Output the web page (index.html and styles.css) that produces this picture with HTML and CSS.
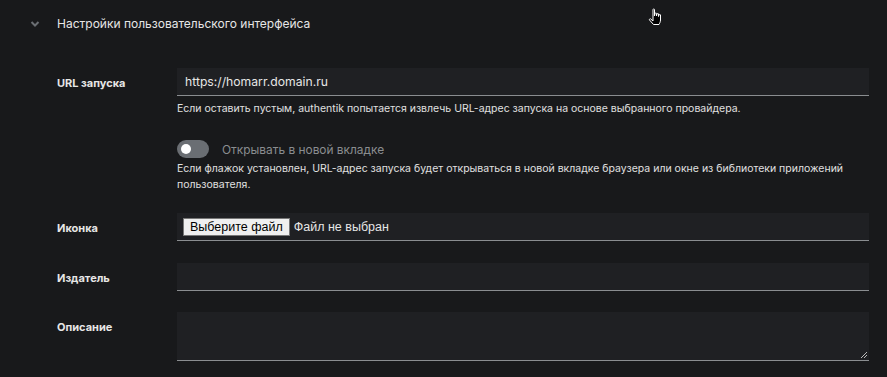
FILE: index.html
```html
<!DOCTYPE html>
<html lang="ru">
<head>
<meta charset="utf-8">
<link rel="stylesheet" href="styles.css">
</head>
<body>
<div class="page">
  <div class="section-head">
    <svg class="chev" width="10" height="8" viewBox="0 0 10 8"><path d="M1.5 2 L5 5.5 L8.5 2" fill="none" stroke="#6a6e73" stroke-width="2"/></svg>
    <span class="section-title">Настройки пользовательского интерфейса</span>
  </div>
  <div class="form">
    <div class="row">
      <div class="label">URL запуска</div>
      <div class="field">
        <div class="input">https://homarr.domain.ru</div>
        <div class="help">Если оставить пустым, authentik попытается извлечь URL-адрес запуска на основе выбранного провайдера.</div>
      </div>
    </div>
    <div class="row">
      <div class="label"></div>
      <div class="field">
        <div class="switch-row">
          <span class="switch"><span class="knob"></span></span>
          <span class="switch-label">Открывать в новой вкладке</span>
        </div>
        <div class="help help2">Если флажок установлен, URL-адрес запуска будет открываться в новой вкладке браузера или окне из библиотеки приложений пользователя.</div>
      </div>
    </div>
    <div class="row">
      <div class="label">Иконка</div>
      <div class="field">
        <div class="input file"><span class="file-btn">Выберите файл</span><span class="file-text">Файл не выбран</span></div>
      </div>
    </div>
    <div class="row">
      <div class="label">Издатель</div>
      <div class="field">
        <div class="input"></div>
      </div>
    </div>
    <div class="row">
      <div class="label">Описание</div>
      <div class="field">
        <div class="input textarea">
          <svg class="grip" width="9" height="9" viewBox="0 0 9 9"><path d="M8 2 L2 8 M8 5 L5 8" stroke="#bbb" stroke-width="1"/></svg>
        </div>
      </div>
    </div>
  </div>
  <svg class="cursor" width="18" height="20" viewBox="0 0 18 20"><path d="M5 1.5 C5 0.8 6.5 0.8 6.5 1.5 L6.5 8 L7 5.5 C7 4.8 8.5 4.8 8.5 5.5 L8.5 8 L9 6 C9 5.3 10.5 5.3 10.5 6 L10.5 8.5 L11 7 C11 6.3 12.5 6.3 12.5 7 L12.5 12 C12.5 14 11.5 15.5 11 16.5 L5.5 16.5 L1.5 12 C1 11.3 2 10.3 2.8 11 L5 13 Z" fill="#000" stroke="#fff" stroke-width="1"/></svg>
</div>
</body>
</html>
```

FILE: styles.css
```css
html, body {
  margin: 0;
  padding: 0;
  background: #18191b;
}
.page {
  position: relative;
  width: 887px;
  height: 377px;
  overflow: hidden;
  font-family: "Inter", "Liberation Sans", sans-serif;
  color: #e0e0e0;
}
.section-head {
  display: flex;
  align-items: center;
  height: 44px;
  padding-left: 30px;
  padding-top: 2px;
  box-sizing: border-box;
}
.chev {
  margin-right: 17px;
  margin-top: 1px;
}
.section-title {
  font-size: 12px;
  color: #e6e6e6;
}
.form {
  display: flex;
  flex-direction: column;
  padding-top: 24px;
}
.row {
  display: flex;
  margin-bottom: 22px;
}
.row:nth-child(2) { margin-bottom: 20px; }
.row:nth-child(4) { margin-bottom: 21px; }
.label {
  width: 120px;
  padding-left: 57px;
  padding-top: 8px;
  font-size: 11px;
  font-weight: 700;
  color: #e6e6e6;
}
.field {
  width: 692px;
}
.input {
  height: 27px;
  background: #1f2023;
  border-bottom: 1px solid #8a8d90;
  font-size: 12.2px;
  color: #e6e6e6;
  padding-left: 8px;
  line-height: 28px;
  box-sizing: content-box;
}
.help {
  font-size: 10.5px;
  color: #e0e0e0;
  margin-top: 5px;
  line-height: 16px;
}
.help2 {
  margin-top: 2px;
  padding-right: 20px;
}
.switch-row {
  display: flex;
  align-items: center;
  height: 20px;
  margin-top: 0;
}
.switch {
  width: 32px;
  height: 18px;
  border-radius: 9px;
  background: #6a6e73;
  position: relative;
  display: inline-block;
}
.knob {
  position: absolute;
  left: 4px;
  top: 4px;
  width: 10px;
  height: 10px;
  border-radius: 50%;
  background: #fff;
}
.switch-label {
  margin-left: 13px;
  font-size: 11.9px;
  color: #8a8d90;
}
.file {
  padding-left: 6px;
  display: flex;
  align-items: center;
  font-family: "Liberation Sans", Arial, sans-serif;
  font-size: 12.5px;
}
.file-btn {
  background: #efefef;
  color: #000;
  border: 1px solid #767676;
  padding: 0 6px;
  line-height: 16px;
  height: 16px;
  display: inline-block;
}
.file-text {
  margin-left: 4px;
  color: #e6e6e6;
}
.textarea {
  height: 48px;
  position: relative;
}
.grip {
  position: absolute;
  right: 1px;
  bottom: 1px;
}
.cursor {
  position: absolute;
  left: 648px;
  top: 8px;
}
```
